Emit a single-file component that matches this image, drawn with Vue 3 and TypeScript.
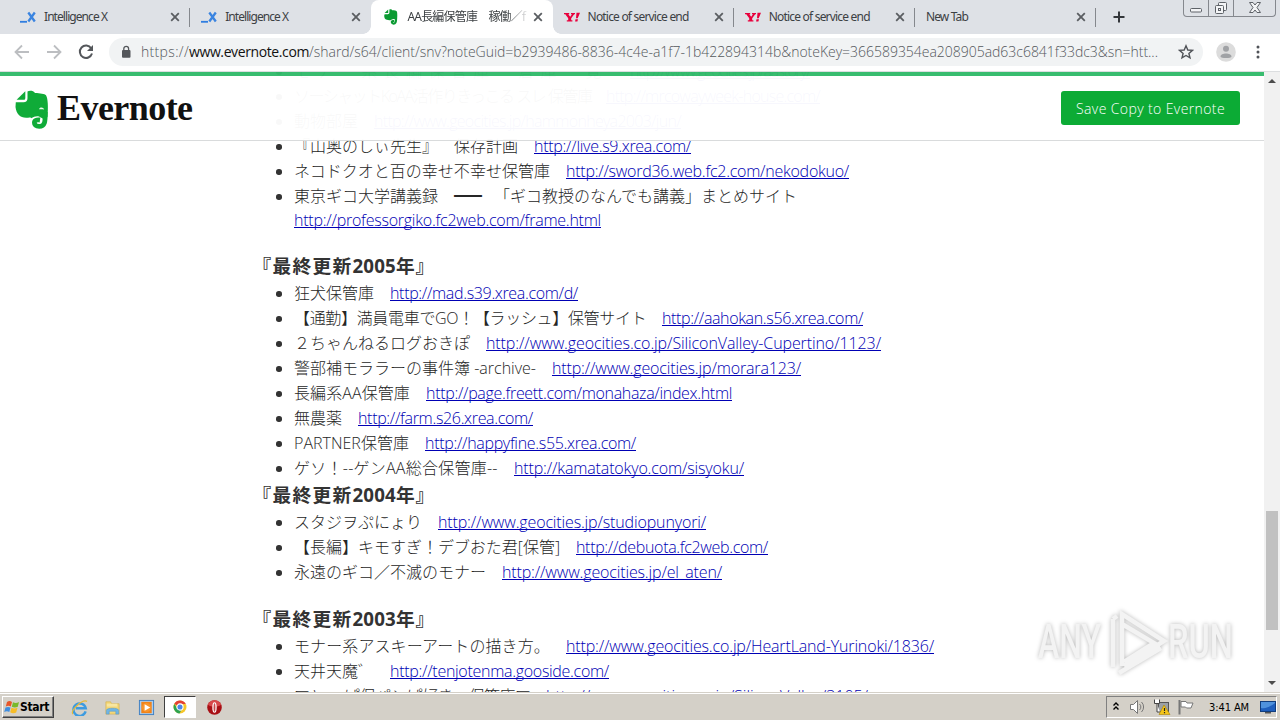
<script setup lang="ts">
interface Seg {
  t: string
  w: number
  link?: boolean
}
interface Row {
  segs: Seg[]
  next?: Seg
}
interface Section {
  title?: { a: string; year: string; b: string }
  gap?: boolean
  rows: Row[]
}
interface Tab {
  title: string
  w: number
  icon: 'ix' | 'ever' | 'yahoo' | 'none'
  active?: boolean
  sep?: boolean
}

/* Spreads the letters of an element so that it takes the given width. */
const vFit = {
  mounted(el: HTMLElement, binding: { value: number }) {
    const n = Array.from(el.textContent ?? '').length
    if (!n) return
    const natural = el.getBoundingClientRect().width
    el.style.letterSpacing = `${(binding.value - natural) / n}px`
  },
}

const tabs: Tab[] = [
  { title: 'Intelligence X', w: 63, icon: 'ix', sep: true },
  { title: 'Intelligence X', w: 63, icon: 'ix' },
  { title: 'AA長編保管庫　稼働／f', w: 118, icon: 'ever', active: true },
  { title: 'Notice of service end', w: 101, icon: 'yahoo', sep: true },
  { title: 'Notice of service end', w: 101, icon: 'yahoo', sep: true },
  { title: 'New Tab', w: 42, icon: 'none', sep: true },
]

const row = (t: string, w: number, url: string, uw: number): Row => ({
  segs: [{ t, w }, { t: url, w: uw, link: true }],
})

const sections: Section[] = [
  {
    rows: [
      row('モナー系長編保管庫　倉庫一覧　', 336, 'http://www.geocities.jp/aastory/', 180),
      row('ソーシャットKoAA活作りきっこる スレ 保管庫　', 312, 'http://mrcowayweek-house.com/', 214),
      row('動物部屋　', 80, 'http://www.geocities.jp/hammonheya2003/jun/', 307),
      row('『山奥のしぃ先生』　保存計画　', 240, 'http://live.s9.xrea.com/', 157),
      row('ネコドクオと百の幸せ不幸せ保管庫　', 272, 'http://sword36.web.fc2.com/nekodokuo/', 283),
      {
        segs: [
          { t: '東京ギコ大学講義録　', w: 160 },
          { t: '━━', w: 24 },
          { t: '　「ギコ教授のなんでも講義」まとめサイト', w: 319 },
        ],
        next: { t: 'http://professorgiko.fc2web.com/frame.html', w: 307, link: true },
      },
    ],
  },
  {
    title: { a: '『最終更新', year: '2005', b: '年』' },
    gap: true,
    rows: [
      row('狂犬保管庫　', 96, 'http://mad.s39.xrea.com/d/', 188),
      row('【通勤】満員電車でGO！【ラッシュ】保管サイト　', 368, 'http://aahokan.s56.xrea.com/', 201),
      row('２ちゃんねるログおきぽ　', 192, 'http://www.geocities.co.jp/SiliconValley-Cupertino/1123/', 395),
      row('警部補モララーの事件簿 -archive-　', 258, 'http://www.geocities.jp/morara123/', 249),
      row('長編系AA保管庫　', 132, 'http://page.freett.com/monahaza/index.html', 306),
      row('無農薬　', 64, 'http://farm.s26.xrea.com/', 175),
      row('PARTNER保管庫　', 131, 'http://happyfine.s55.xrea.com/', 211),
      row('ゲソ！--ゲンAA総合保管庫--　', 220, 'http://kamatatokyo.com/sisyoku/', 230),
    ],
  },
  {
    title: { a: '『最終更新', year: '2004', b: '年』' },
    rows: [
      row('スタジヲぷにょり　', 144, 'http://www.geocities.jp/studiopunyori/', 268),
      row('【長編】キモすぎ！デブおた君[保管]　', 282, 'http://debuota.fc2web.com/', 192),
      row('永遠のギコ／不滅のモナー　', 208, 'http://www.geocities.jp/el_aten/', 220),
    ],
  },
  {
    title: { a: '『最終更新', year: '2003', b: '年』' },
    gap: true,
    rows: [
      row('モナー系アスキーアートの描き方。　', 272, 'http://www.geocities.co.jp/HeartLand-Yurinoki/1836/', 368),
      row('天井天魔゛　', 96, 'http://tenjotenma.gooside.com/', 219),
      row('マヤー ぱ保パンぱ好き　保管庫マ　', 252, 'http://www.geocities.co.jp/SiliconValley/3105/', 322),
    ],
  },
]
</script>

<template>
  <div class="screen">
    <div class="tabstrip">
      <div v-for="(tab, i) in tabs" :key="i" class="tab" :class="{ active: tab.active, sep: tab.sep }">
        <svg v-if="tab.icon === 'ix'" class="fav" viewBox="0 0 16 16">
          <path d="M0 12.800h7" stroke="#2f7de0" stroke-width="1.800" />
          <path d="M8.300 3.500l6.500 9M14.800 3.500l-6.500 9" stroke="#3a84e0" stroke-width="2.300" />
        </svg>
        <svg v-else-if="tab.icon === 'ever'" class="fav" viewBox="0 0 34 40">
          <path fill="#0a9a32" d="M1 13h8c2 0 4-1 4-4V1c2-1 6-1 7 2 5 0 11 1 12 4 1 6 1 13 0 20l-9-2c-3 0-4 2-7 3C7 28 0 27 0 17z" />
          <path fill="none" stroke="#0a9a32" stroke-width="5.500" d="M29.500 24c.5 9-2 12.500-6 12.500-5 0-6-6-1.500-6.500h3" />
          <path fill="#0a9a32" d="M1 10L10 1v9z" />
        </svg>
        <svg v-else-if="tab.icon === 'yahoo'" class="fav" viewBox="0 0 16 16">
          <path d="M0 4h5.200v1.300h-.9l1.900 2.500L8 5.300H7V4h4v1.300h-.8L7.200 9.300v2h1.200v1.200H2.800v-1.200h1.400v-2L1.300 5.300H0z" fill="#e8003c" />
          <path d="M12.500 3.800H16l-2.300 5.400H12zM11.500 10.300H14l-.6 2.200h-2.300z" fill="#e8003c" />
        </svg>
        <span class="tabtitle"><span v-fit="tab.w">{{ tab.title }}</span></span>
        <svg class="close" viewBox="0 0 10 10"><path d="M1.200 1.200l7.600 7.600M8.800 1.200L1.200 8.800" /></svg>
      </div>
      <svg class="plus" viewBox="0 0 12 12"><path d="M6 .5v11M.5 6h11" /></svg>
      <div class="winbtns">
        <div><svg viewBox="0 0 24 16"><rect x="6.500" y="8.500" width="11" height="3.500" rx="1" /></svg></div>
        <div>
          <svg viewBox="0 0 24 16">
            <rect x="9.500" y="2.500" width="8" height="8" rx="1" />
            <rect x="6.500" y="5.500" width="8" height="8" rx="1" />
            <rect x="9.500" y="8.500" width="2" height="2" />
          </svg>
        </div>
        <div class="wide"><svg viewBox="0 0 42 16"><path d="M15.500 2.500h3.500l2 2.500 2-2.500h3.500L23 7.500l3.500 5H23l-2-2.500-2 2.500h-3.500l3.500-5z" /></svg></div>
      </div>
    </div>

    <div class="toolbar">
      <svg class="nav" viewBox="0 0 16 16"><path d="M15 8H2M8 1.500L1.500 8 8 14.500" stroke="#bcbec1" /></svg>
      <svg class="nav" viewBox="0 0 16 16"><path d="M1 8h13M8 1.500L14.500 8 8 14.500" stroke="#bcbec1" /></svg>
      <svg class="nav" viewBox="0 0 16 16">
        <path d="M13.200 4.200A6.200 6.200 0 1 0 14 9.500" stroke="#54575b" stroke-width="2" />
        <path d="M15 1v6H9z" fill="#54575b" />
      </svg>
      <div class="omnibox">
        <svg class="lock" viewBox="0 0 10 14">
          <rect x="1" y="5" width="8.500" height="7.800" rx="1" fill="#54575b" />
          <path d="M2.800 5.500V3.700a2.400 2.400 0 0 1 4.800 0v1.800" fill="none" stroke="#54575b" stroke-width="1.300" />
        </svg>
        <span class="url"><span v-fit="48">https://</span><span v-fit="120" class="host">www.evernote.com</span><span v-fit="849">/shard/s64/client/snv?noteGuid=b2939486-8836-4c4e-a1f7-1b422894314b&amp;noteKey=366589354ea208905ad63c6841f33dc3&amp;sn=htt...</span></span>
        <svg class="star" viewBox="0 0 16 16"><path d="M8 1.800l1.800 4.200 4.700.4-3.600 3 1.100 4.500L8 11.500l-4 2.400 1.100-4.500-3.600-3L6.200 6z" /></svg>
      </div>
      <svg class="avatar" viewBox="0 0 20 20">
        <circle cx="10" cy="10" r="9.800" fill="#dcdcdc" />
        <circle cx="10" cy="6.800" r="3" fill="#a0a2a5" />
        <path d="M4.500 14.500c0-4 11-4 11 0 0 2-11 2-11 0z" fill="#a0a2a5" />
      </svg>
      <svg class="dots" viewBox="0 0 4 16"><circle cx="2" cy="3" r="1.500" /><circle cx="2" cy="8" r="1.500" /><circle cx="2" cy="13" r="1.500" /></svg>
    </div>

    <div class="viewport">
      <div class="page">
        <div class="note">
          <section v-for="(s, i) in sections" :key="i" :class="{ gap: s.gap }">
            <h3 v-if="s.title"><span v-fit="100">{{ s.title.a }}</span><span v-fit="43.500">{{ s.title.year }}</span><span v-fit="39">{{ s.title.b }}</span></h3>
            <ul>
              <li v-for="(r, j) in s.rows" :key="j">
                <i class="bullet"></i>
                <div>
                  <div class="line"><span v-for="(g, k) in r.segs" :key="k" v-fit="g.w" :class="{ link: g.link }">{{ g.t }}</span></div>
                  <div v-if="r.next" class="line second"><span v-fit="r.next.w" class="link">{{ r.next.t }}</span></div>
                </div>
              </li>
            </ul>
          </section>
        </div>
        <header class="head">
          <svg class="elephant" viewBox="0 0 34 40">
            <path fill="#0fab38" d="M.8 12.300H8.500c2.600 0 4-1.400 4-4V1.500C14 .5 18.500.4 20 3c5 .3 9.800.8 11 2.300 2 3 2.300 12 1.500 21.700l-4 2-4.500-2.500c-3.500-.6-5 .6-8 1.700-.5-.8-.8-1-1.200-.8C6.500 29 1.600 25.500.5 17z" />
            <path fill="none" stroke="#0fab38" stroke-width="4.800" d="M30.200 22c.2 10-.4 14.400-6 14.400-3.500 0-4.800-1.700-4.800-3.700 0-2.300 2-3.200 5.600-2.700" />
            <path fill="#0fab38" d="M1.600 9.800L10.300 1.200V8c0 1.300-.6 1.800-1.800 1.800z" />
            <path fill="#e8f8ec" d="M24 19.300c.6-2.600 4.400-2.600 5.200.3-1.700-.5-3.400-.5-5.200-.3z" />
          </svg>
          <span class="brand"><span v-fit="135.500">Evernote</span></span>
          <button class="save"><span v-fit="149">Save Copy to Evernote</span></button>
        </header>
        <svg class="watermark" viewBox="0 0 210 74">
          <g class="wm-shadow">
            <g class="wm-text">
              <text x="8" y="54" textLength="63" lengthAdjust="spacingAndGlyphs">ANY</text>
              <text x="138" y="54" textLength="65" lengthAdjust="spacingAndGlyphs">RUN</text>
            </g>
            <path class="wm-line" d="M83 15v48M92 62V10l42 27-40 25M83 15l4-3M92 20l32 19-30 19M89 69l42-25" />
          </g>
        </svg>
      </div>
      <div class="scroll">
        <i class="up"></i>
        <i class="thumb"></i>
        <i class="down"></i>
      </div>
    </div>

    <div class="taskbar">
      <div class="start">
        <svg viewBox="0 0 16 16">
          <path d="M3 3c2-1.500 3.500-1 5 0L6.800 7.500C5 6.500 3.500 6.700 1.800 7.500z" fill="#e8572a" />
          <path d="M9 3.300c2 1 4 .8 6-.3l-1.200 4.700c-2 1-4 1-6 0z" fill="#79b92c" />
          <path d="M1.500 8.600c1.800-1 3.400-.9 5 0L5.300 13C3.500 12 2 12.200.2 13z" fill="#3f8ee0" />
          <path d="M7.500 8.800c2 1 4 1 6 0L12.200 13.400c-2 1-4 1-6-.2z" fill="#f7bd27" />
        </svg>
        <b v-fit="29">Start</b>
      </div>
      <div class="quick">
        <svg viewBox="0 0 18 18">
          <path d="M15.500 13.200A6.600 6.600 0 1 1 15.600 9.800H5" fill="none" stroke="#3d9be0" stroke-width="2.600" />
          <path d="M2 16C-1 12 12 0 17 2.500" fill="none" stroke="#e5b93a" stroke-width="1.300" />
        </svg>
      </div>
      <div class="quick">
        <svg viewBox="0 0 18 18">
          <path d="M2 3h5l1 2h8v11H2z" fill="#f3d779" stroke="#d2ac42" stroke-width=".6" />
          <path d="M3 5h11v3H3z" fill="#f8e6a0" />
          <path d="M2.500 16v-4c0-3 13-3 13 0v4h-3v-3h-7v3z" fill="#6fb5e6" stroke="#4a94cc" stroke-width=".5" />
        </svg>
      </div>
      <div class="quick">
        <svg viewBox="0 0 18 18">
          <rect x="1.500" y="1.500" width="15" height="15" fill="#a9cdf0" stroke="#3e7fc2" />
          <rect x="3.500" y="3" width="11" height="12" fill="#f18318" />
          <circle cx="9" cy="9" r="4.800" fill="#f7952d" />
          <path d="M7 5.500l6 3.500-6 3.500z" fill="#fff" />
        </svg>
      </div>
      <div class="quick pressed">
        <svg viewBox="0 0 18 18">
          <circle cx="9" cy="9" r="6.500" fill="#f6c629" />
          <path d="M9 9L3.200 5.800A6.600 6.600 0 0 1 14.800 6H9z" fill="#e34133" />
          <path d="M3.300 5.900A6.500 6.500 0 0 0 8.500 15.500L11 11 6 10z" fill="#2ea34f" />
          <circle cx="9" cy="9" r="3.100" fill="#4a86e8" stroke="#fff" stroke-width="1.100" />
        </svg>
      </div>
      <div class="quick">
        <svg viewBox="0 0 18 18">
          <circle cx="9" cy="9" r="7.700" fill="#a80f14" />
          <path d="M2 6a7.500 7.500 0 0 1 14 0c-4 3-10 3-14 0z" fill="#d8484a" />
          <ellipse cx="9" cy="9" rx="2.300" ry="5.600" fill="#fff" />
          <ellipse cx="9" cy="9" rx="1" ry="4.600" fill="#c8484a" />
        </svg>
      </div>
      <div class="tray">
        <svg class="chev" viewBox="0 0 8 10"><path d="M1.500 4.500L4 2l2.500 2.500M1.500 8.500L4 6l2.500 2.500" /></svg>
        <svg class="t18" viewBox="0 0 18 18">
          <path d="M1.500 6.500h3l4-4v13l-4-4h-3z" fill="#fff" stroke="#777" />
          <path d="M10.500 6a4 4 0 0 1 0 6M12.500 4a7 7 0 0 1 0 10" fill="none" stroke="#777" />
        </svg>
        <svg class="t18" viewBox="0 0 18 18">
          <rect x="5.500" y="4.500" width="10" height="9" fill="#9ba0a5" stroke="#555" />
          <path d="M1.500 1.500v4h5v-4M4 5.500V14h3" fill="#fff" stroke="#444" />
          <path d="M11 7l6 9.500H6z" fill="#f5c518" stroke="#a88200" stroke-width=".6" />
          <path d="M11.500 10v3M11.500 14v1.200" stroke="#222" stroke-width="1.200" />
        </svg>
        <svg class="t18" viewBox="0 0 18 18">
          <path d="M2.500 2v14.500" stroke="#777" stroke-width="2" />
          <path d="M4 3.500h5l1 1.500h6l-2 5H9.500L8.500 9H4z" fill="#fff" stroke="#777" />
        </svg>
        <span class="clock"><span v-fit="40">3:41 AM</span></span>
        <svg class="desk" viewBox="0 0 16 14">
          <rect x=".5" y="1.500" width="15" height="10" fill="#1f5fbd" stroke="#113d7d" />
          <path d="M1 8C6 9 11 6 15 3v-1H1z" fill="#4f92dd" />
          <path d="M5 12h6v1.500H5z" fill="#555" />
        </svg>
      </div>
    </div>
  </div>
</template>

<style>
body {
  overflow: hidden;
}
</style>

<style scoped>
* {
  box-sizing: border-box;
}
.screen {
  width: 1280px;
  height: 720px;
  display: flex;
  flex-direction: column;
  overflow: hidden;
  background: #fff;
  font-family: 'Open Sans', 'Noto Sans CJK JP', sans-serif;
  text-spacing-trim: space-all;
  color: #262626;
}
svg {
  flex: none;
}
.tabstrip {
  height: 34px;
  flex: none;
  display: flex;
  background: #dee1e6;
  padding-left: 9px;
}
.tab {
  width: 181.2px;
  flex: none;
  height: 34px;
  display: flex;
  align-items: center;
  padding: 0 10px 0 11px;
  position: relative;
  font-family: 'Noto Sans', 'Noto Sans CJK JP', sans-serif;
  font-size: 12px;
  color: #3c4043;
}
.tab.sep::after {
  content: '';
  position: absolute;
  right: 0;
  top: 8px;
  width: 1px;
  height: 19px;
  background: #85888d;
}
.tab.active {
  background: #fff;
  border-radius: 8px 8px 0 0;
}
.tab.active::before,
.tab.active::after {
  content: '';
  position: absolute;
  bottom: 0;
  width: 8px;
  height: 8px;
}
.tab.active::before {
  left: -8px;
  background: radial-gradient(circle at 0 0, #dee1e6 7.5px, #fff 8px);
}
.tab.active::after {
  right: -8px;
  background: radial-gradient(circle at 100% 0, #dee1e6 7.5px, #fff 8px);
}
.fav {
  width: 16px;
  height: 16px;
  margin-right: 8px;
}
.active .fav {
  margin-right: 9px;
}
.tab:nth-of-type(3) .fav {
  margin-left: 1px;
  margin-right: 8px;
}
.tabtitle {
  flex: 1;
  white-space: pre;
  line-height: 18px;
}
.active .tabtitle {
  -webkit-mask-image: linear-gradient(90deg, #000 100px, transparent 122px);
  mask-image: linear-gradient(90deg, #000 100px, transparent 122px);
}
.close {
  width: 10px;
  height: 10px;
}
.close path {
  stroke: #5a5d61;
  stroke-width: 1.8;
}
.plus {
  width: 12px;
  height: 12px;
  margin: 11px 0 0 17px;
}
.plus path {
  stroke: #33363a;
  stroke-width: 2;
}
.winbtns {
  margin-left: auto;
  margin-right: 4px;
  width: 93px;
  height: 17px;
  display: flex;
  border: 1px solid #85888e;
  border-top: 0;
  border-radius: 0 0 4px 4px;
}
.winbtns div {
  width: 25px;
  border-right: 1px solid #85888e;
}
.winbtns .wide {
  width: 41px;
  border: 0;
}
.winbtns svg {
  display: block;
  height: 16px;
  width: 24px;
  fill: #f3f4f6;
  stroke: #5e6268;
}
.winbtns .wide svg {
  width: 42px;
}
.toolbar {
  height: 38px;
  flex: none;
  display: flex;
  align-items: center;
  padding: 0 0 2px 14px;
  border-bottom: 1px solid #dcdee0;
}
.nav {
  width: 16px;
  height: 16px;
  margin-right: 16px;
  fill: none;
  stroke-width: 1.8;
}
.omnibox {
  margin-left: -1px;
  width: 1094px;
  height: 28px;
  border-radius: 14px;
  background: #f1f3f4;
  display: flex;
  align-items: center;
  padding: 0 9px 0 12px;
}
.lock {
  width: 10px;
  height: 14px;
  margin-right: 10px;
}
.url {
  white-space: pre;
  font-size: 14px;
  line-height: 28px;
  height: 27px;
  font-weight: 300;
  color: #54585c;
}
.host {
  color: #111;
  font-weight: 400;
}
.star {
  width: 16px;
  height: 16px;
  margin-left: auto;
  fill: none;
  stroke: #505358;
  stroke-width: 1.4;
}
.avatar {
  width: 20px;
  height: 20px;
  margin-left: 13px;
}
.dots {
  width: 4px;
  height: 16px;
  margin-left: 20px;
  fill: #505358;
}
.viewport {
  height: 620px;
  flex: none;
  display: flex;
}
.page {
  width: 1264px;
  height: 620px;
  position: relative;
  overflow: hidden;
}
.note {
  padding-left: 254px;
  margin-top: -13px;
}
section.gap {
  padding-top: 20px;
}
h3 {
  margin: 0 0 0 -1.5px;
  height: 29px;
  line-height: 28px;
  font-size: 18.72px;
  font-weight: 700;
  white-space: pre;
  color: #333;
}
ul {
  margin: 0;
  padding: 0;
  list-style: none;
}
li {
  display: flex;
  font-size: 16px;
  font-weight: 300;
}
.bullet {
  width: 5.5px;
  height: 5.5px;
  border-radius: 50%;
  background: #333;
  margin: 10px 12.5px 0 22px;
}
.line {
  height: 25px;
  line-height: 25px;
  white-space: pre;
}
.second {
  height: 23px;
  line-height: 22px;
}
.link {
  color: #0000b4;
  text-decoration: underline;
  text-decoration-skip-ink: none;
  text-decoration-thickness: 1px;
  text-underline-offset: 1px;
}
.head {
  position: absolute;
  left: 0;
  top: -1px;
  width: 1264px;
  height: 70px;
  border-top: 5px solid rgba(50, 186, 106, 0.97);
  border-bottom: 1px solid #d9dbdc;
  background: rgba(255, 255, 255, 0.97);
  background-clip: padding-box;
  display: flex;
  align-items: center;
  padding: 0 24px 0 15px;
}
.elephant {
  width: 34px;
  height: 40px;
  margin-top: 4px;
}
.brand {
  margin-left: 8px;
  font-family: 'Liberation Serif', serif;
  font-weight: 700;
  font-size: 36px;
  line-height: 40px;
  color: #111;
  white-space: pre;
}
.save {
  margin: -1px 0 0 auto;
  width: 179px;
  height: 34px;
  border: 0;
  border-radius: 3px;
  background: #0cab35;
  color: #fff;
  font-family: 'Open Sans', sans-serif;
  font-weight: 300;
  font-size: 14px;
  padding: 2px 0 0;
  white-space: pre;
}
.watermark {
  position: absolute;
  left: 1030px;
  top: 532px;
  width: 210px;
  height: 74px;
}
.wm-shadow {
  filter: drop-shadow(0 0 2px rgba(0, 0, 0, 0.28));
}
.wm-text {
  font-family: Roboto, sans-serif;
  font-size: 49px;
  font-weight: 500;
  fill: #f3f3f3;
}
.wm-line {
  fill: none;
  stroke: #f3f3f3;
  stroke-width: 4.5;
}
.scroll {
  width: 16px;
  height: 620px;
  background: #f1f1f1;
  display: flex;
  flex-direction: column;
  align-items: center;
}
.up,
.down {
  border: 4px solid transparent;
  width: 0;
  height: 0;
}
.up {
  border-bottom-color: #4d4d4d;
  border-top: 0;
  margin-top: 7px;
}
.thumb {
  width: 12px;
  height: 119px;
  background: #c1c1c1;
  margin-top: 428px;
}
.down {
  border-top-color: #4d4d4d;
  border-bottom: 0;
  margin-top: 51px;
}
.taskbar {
  height: 28px;
  flex: none;
  background: #d4d0c8;
  border-top: 1px solid #d4d0c8;
  box-shadow: inset 0 1px #fff;
  display: flex;
  align-items: flex-start;
  padding: 3px 3px 0 2px;
}
.start {
  width: 52px;
  height: 22px;
  border: 1px solid;
  border-color: #fff #404040 #404040 #fff;
  box-shadow: inset -1px -1px #808080;
  display: flex;
  align-items: center;
  padding-left: 1px;
  margin-right: 9px;
  font: 700 12px 'DejaVu Sans Condensed', 'DejaVu Sans', sans-serif;
  color: #000;
}
.start svg {
  width: 16px;
  height: 16px;
  margin-right: 0;
}
.quick {
  width: 32px;
  height: 22px;
  display: flex;
  align-items: center;
  justify-content: center;
  margin-right: 1.75px;
}
.quick svg {
  width: 17px;
  height: 17px;
}
.pressed {
  background: #fff;
  border: 1px solid;
  border-color: #404040 #fff #fff #404040;
}
.pressed svg {
  width: 18px;
  height: 18px;
}
.tray {
  margin-left: auto;
  width: 171px;
  height: 22px;
  border: 1px solid;
  border-color: #808080 #fff #fff #808080;
  display: flex;
  align-items: center;
  color: #000;
}
.chev {
  width: 8px;
  height: 10px;
  margin: 0 9px 2px 5px;
  fill: none;
  stroke: #000;
  stroke-width: 1.4;
}
.t18 {
  width: 18px;
  height: 18px;
  margin-right: 6px;
}
.clock {
  width: 51px;
  margin-left: 8px;
  font: 11px 'DejaVu Sans Condensed', 'DejaVu Sans', sans-serif;
  white-space: pre;
}
.desk {
  width: 16px;
  height: 14px;
}
</style>
